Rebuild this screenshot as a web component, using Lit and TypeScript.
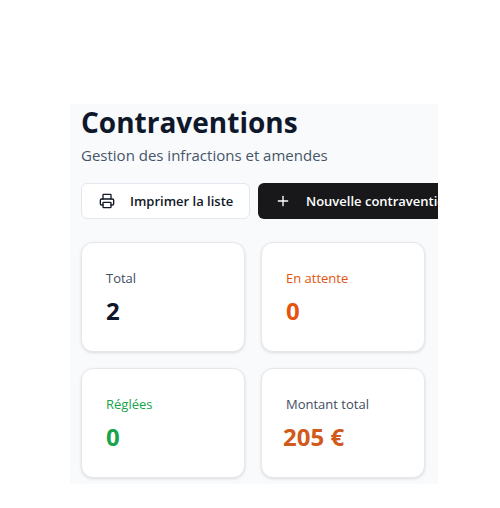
import { LitElement, html, css } from "lit";
import { customElement } from "lit/decorators.js";

@customElement("app-root")
export class AppRoot extends LitElement {
  static styles = css`
    :host { display: block; width: 500px; height: 508px; padding: 104px 0 0 70px; box-sizing: border-box; background: #fff; font-family: "Open Sans", "Noto Sans", sans-serif; }
    .panel { width: 368px; height: 380px; background: #f8fafc; overflow: hidden; padding: 0 0 0 11px; box-sizing: border-box; }
    h1 { margin: 0; font-size: 28px; line-height: 36px; font-weight: 700; color: #0f172a; }
    .sub { margin: 3px 0 0; font-size: 15px; line-height: 24px; color: #475569; }
    .actions { display: flex; gap: 8px; margin-top: 16px; white-space: nowrap; }
    .btn { display: flex; align-items: center; height: 36px; box-sizing: border-box; border-radius: 6px; font-size: 13px; font-weight: 600; flex: none; }
    .outline { width: 169px; background: #fff; border: 1px solid #e2e8f0; color: #111827; padding-left: 17px; gap: 15px; }
    .solid { background: #18181b; color: #fff; padding-left: 17px; gap: 15px; width: 200px; }
    .btn svg { width: 16px; height: 16px; flex: none; }
    .grid { display: grid; grid-template-columns: 164px 164px; gap: 16px; margin-top: 23px; }
    .card { height: 110px; box-sizing: border-box; background: #fff; border: 1px solid #e5e7eb; border-radius: 12px; box-shadow: 0 1px 3px rgba(0,0,0,.12); padding: 25px 24px 0; }
    .label { font-size: 13px; line-height: 20px; font-weight: 500; color: #3f4d63; }
    .value { margin-top: 9px; font-size: 24px; line-height: 28px; font-weight: 700; color: #0f172a; }
    .orange { color: #e4540f; }
    .green { color: #16a34a; }
    .amount { color: #d2591c; margin-left: -3px; }
  `;

  render() {
    return html`<div class="panel">
      <h1>Contraventions</h1>
      <p class="sub">Gestion des infractions et amendes</p>
      <div class="actions">
        <div class="btn outline">
          <svg viewBox="0 0 24 24" fill="none" stroke="currentColor" stroke-width="2" stroke-linecap="round" stroke-linejoin="round"><path d="M6 18H4a2 2 0 0 1-2-2v-5a2 2 0 0 1 2-2h16a2 2 0 0 1 2 2v5a2 2 0 0 1-2 2h-2"/><path d="M6 9V3a1 1 0 0 1 1-1h10a1 1 0 0 1 1 1v6"/><rect x="6" y="14" width="12" height="8" rx="1"/></svg>
          Imprimer la liste
        </div>
        <div class="btn solid">
          <svg viewBox="0 0 24 24" fill="none" stroke="currentColor" stroke-width="2" stroke-linecap="round" stroke-linejoin="round"><path d="M5 12h14"/><path d="M12 5v14"/></svg>
          Nouvelle contravention
        </div>
      </div>
      <div class="grid">
        <div class="card"><div class="label">Total</div><div class="value">2</div></div>
        <div class="card"><div class="label orange">En attente</div><div class="value orange">0</div></div>
        <div class="card"><div class="label green">Réglées</div><div class="value green">0</div></div>
        <div class="card"><div class="label">Montant total</div><div class="value amount">205 €</div></div>
      </div>
    </div>`;
  }
}
